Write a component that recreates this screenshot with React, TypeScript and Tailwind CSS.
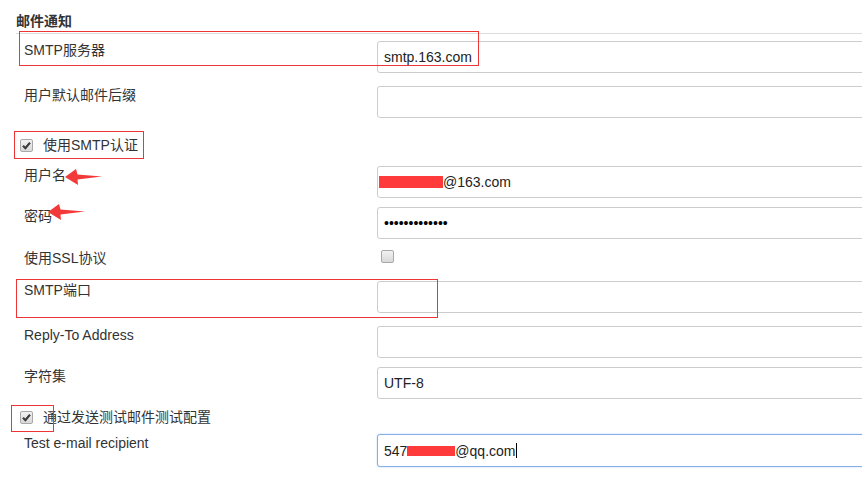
import type { ReactNode } from 'react';

function Box({ checked }: { checked?: boolean }) {
  return (
    <span className="inline-flex h-[13px] w-[13px] shrink-0 items-center justify-center rounded-[2px] border border-[#a8a8a8] bg-gradient-to-b from-[#f2f2f2] to-[#d9d9d9]">
      {checked && (
        <svg width="11" height="11" viewBox="0 0 11 11">
          <path d="M2 5.8 L4.4 8.2 L9 2.6" fill="none" stroke="#3a3a3a" strokeWidth="2.2" />
        </svg>
      )}
    </span>
  );
}

function Field({ label, mt, tall, focus, children }: { label: string; mt: string; tall?: boolean; focus?: boolean; children?: ReactNode }) {
  return (
    <div className={`flex ${mt}`}>
      <div className="w-[361px] shrink-0 pl-2 leading-[18px]">{label}</div>
      <div
        className={`relative flex w-[520px] shrink-0 items-center rounded-[3px] border bg-white pl-[6px] leading-none text-[#222] ${tall ? 'h-[33px]' : 'h-8'} ${focus ? 'border-[#86aeea] shadow-[0_0_2px_#b9d0f3]' : 'border-[#cccccc]'}`}
      >
        {children}
      </div>
    </div>
  );
}

function Arrow({ className }: { className: string }) {
  return (
    <svg className={className} width="37" height="16" viewBox="0 0 37 16">
      <polygon points="0,8 11,0 12.5,5.5 37,7.5 12.5,10.5 13,16" fill="#f23a3a" />
    </svg>
  );
}

export default function App() {
  return (
    <div className="relative h-[488px] w-[862px] overflow-hidden bg-white pl-4 font-['Liberation_Sans','Noto_Sans_CJK_SC',sans-serif] text-[14px] text-[#333]">
      <div className="pt-3 font-bold leading-[18px]">邮件通知</div>
      <div className="mt-[3px] h-px bg-[#dcdcdc]" />

      <Field label="SMTP服务器" mt="mt-[7px]">smtp.163.com</Field>
      <Field label="用户默认邮件后缀" mt="mt-[13px]" />

      <div className="mt-[18px] flex h-[18px] items-center pl-1">
        <Box checked />
        <span className="ml-[10px] leading-[18px]">使用SMTP认证</span>
      </div>

      <Field label="用户名" mt="mt-[12px]">
        <span className="-ml-[5px] mr-0 inline-block h-[12px] w-[64px] bg-[#ff3a3a]" />
        @163.com
      </Field>
      <Field label="密码" mt="mt-[9px]">
        <span className="text-[14px] tracking-[0px] text-black">•••••••••••••</span>
      </Field>

      <div className="mt-[10px] flex h-[18px] items-center">
        <div className="w-[361px] shrink-0 pl-2 leading-[18px]">使用SSL协议</div>
        <div className="pl-1">
          <Box />
        </div>
      </div>

      <Field label="SMTP端口" mt="mt-[14px]" />
      <Field label="Reply-To Address" mt="mt-[13px]" />
      <Field label="字符集" mt="mt-[9px]">UTF-8</Field>

      <div className="mt-[9px] flex h-[18px] items-center pl-1">
        <Box checked />
        <span className="ml-[10px] leading-[18px]">通过发送测试邮件测试配置</span>
      </div>

      <Field label="Test e-mail recipient" mt="mt-[8px]" tall focus>
        547
        <span className="inline-block h-[10px] w-[48px] bg-[#ff3a3a]" />
        @qq.com
        <span className="ml-px inline-block h-[15px] w-px bg-black" />
      </Field>

      {/* annotations drawn over the form */}
      <div className="absolute left-[19px] top-[31px] h-[35px] w-[460px] border border-[#ee3535]" />
      <div className="absolute left-[14px] top-[131px] h-[28px] w-[130px] border border-[#ee3535]" />
      <div className="absolute left-[16px] top-[279px] h-[39px] w-[422px] border border-[#ee3535]" />
      <div className="absolute left-[11px] top-[405px] h-[27px] w-[43px] border border-[#ee3535]" />
      <Arrow className="absolute left-[65px] top-[169px]" />
      <Arrow className="absolute left-[48px] top-[204px]" />
    </div>
  );
}
